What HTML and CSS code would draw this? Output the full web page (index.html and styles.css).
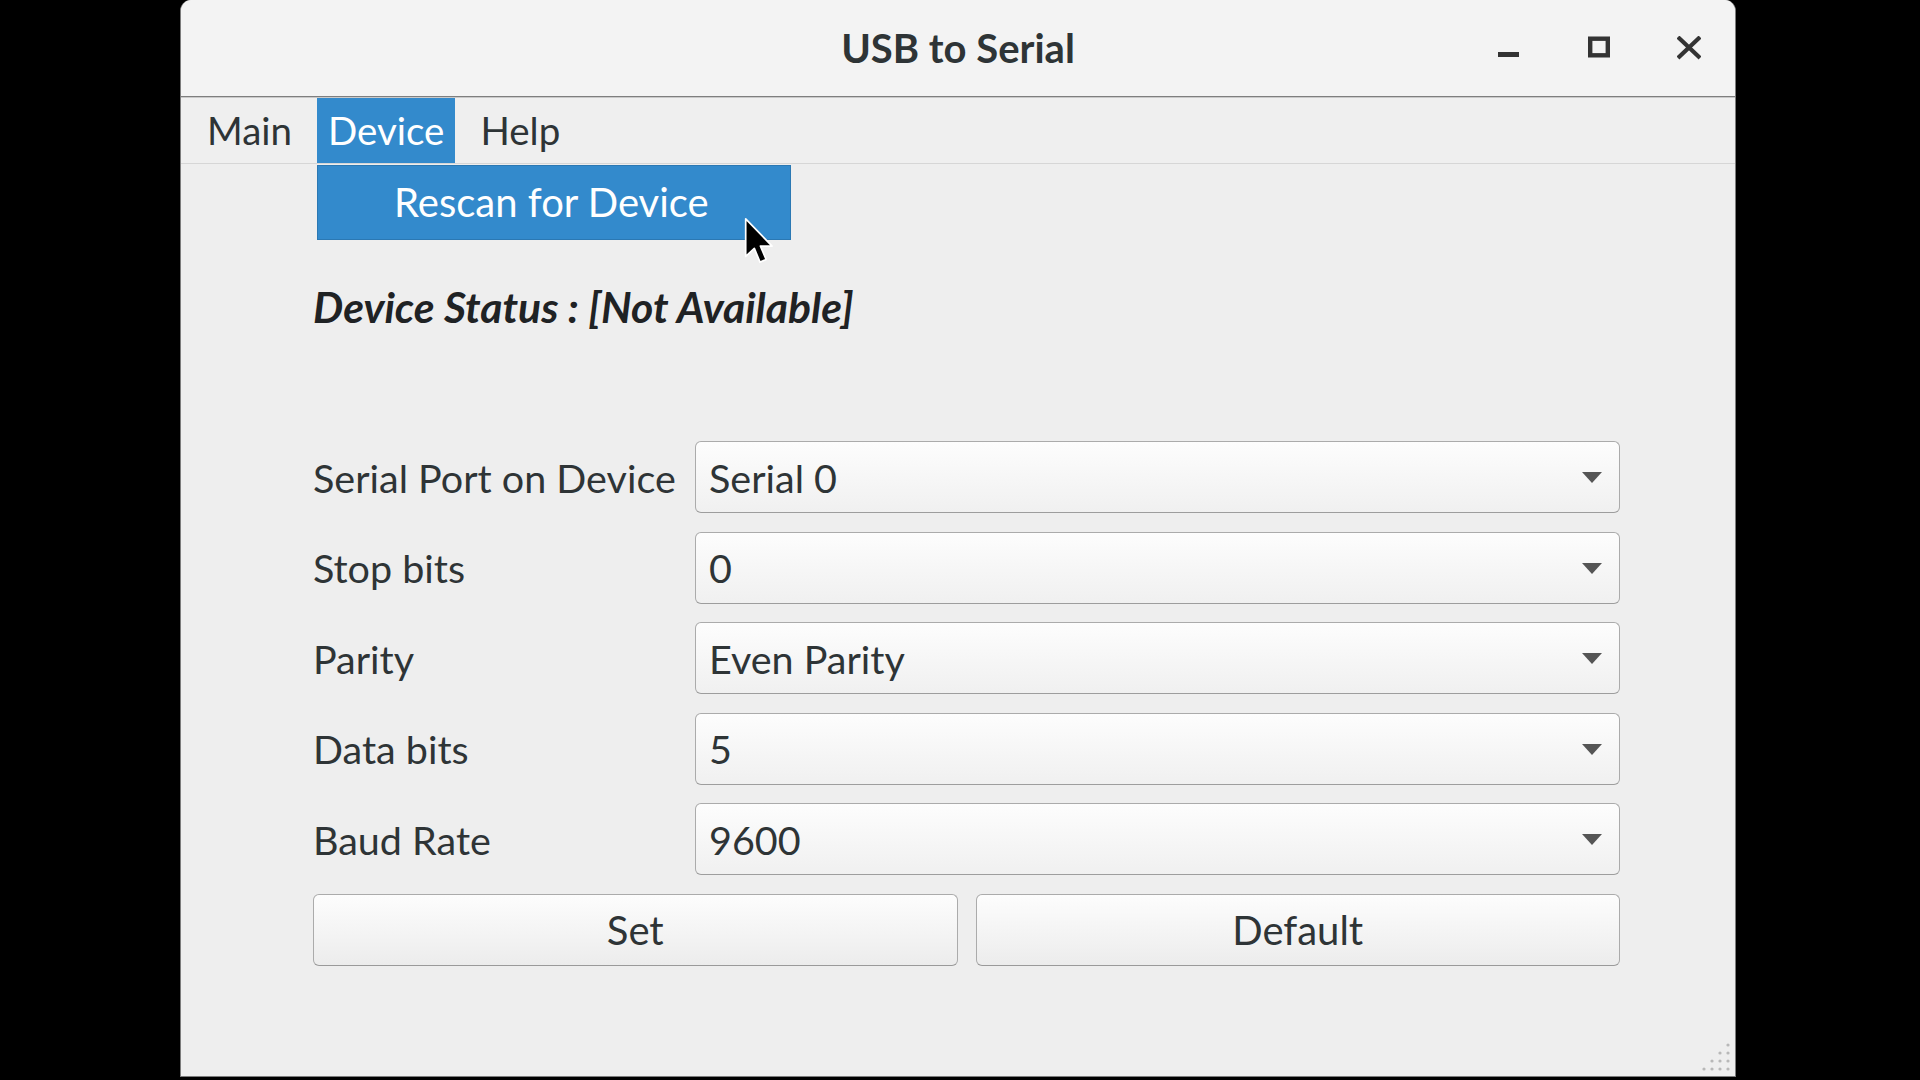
FILE: index.html
```html
<!DOCTYPE html>
<html lang="en">
<head>
<meta charset="utf-8">
<title>USB to Serial</title>
<link rel="stylesheet" href="styles.css">
</head>
<body>
<div class="window">
  <header class="titlebar">
    <div class="spacer"></div>
    <div class="title">USB to Serial</div>
    <div class="controls">
      <span class="ctl"><svg width="24" height="24" viewBox="0 0 24 24"><rect x="1" y="16" width="21" height="5" fill="#333"/></svg></span>
      <span class="ctl"><svg width="24" height="24" viewBox="0 0 24 24"><rect x="3.2" y="2.7" width="17.6" height="16.6" fill="none" stroke="#333" stroke-width="4.4"/></svg></span>
      <span class="ctl"><svg width="24" height="24" viewBox="0 0 24 24"><path d="M2.5 2.5 L21.5 20.5 M21.5 2.5 L2.5 20.5" stroke="#333" stroke-width="4.2" stroke-linecap="square"/></svg></span>
    </div>
  </header>
  <nav class="menubar">
    <span class="menu">Main</span>
    <span class="menu active">Device
      <span class="dropdown"><span class="dd-item">Rescan for Device</span></span>
    </span>
    <span class="menu">Help</span>
  </nav>
  <main class="content">
    <div class="status">Device Status : [Not Available]</div>
    <div class="form">
      <div class="label">Serial Port on Device</div>
      <div class="combo"><span>Serial 0</span><i class="arrow"></i></div>
      <div class="label">Stop bits</div>
      <div class="combo"><span>0</span><i class="arrow"></i></div>
      <div class="label">Parity</div>
      <div class="combo"><span>Even Parity</span><i class="arrow"></i></div>
      <div class="label">Data bits</div>
      <div class="combo"><span>5</span><i class="arrow"></i></div>
      <div class="label">Baud Rate</div>
      <div class="combo"><span>9600</span><i class="arrow"></i></div>
      <div class="buttons">
        <button class="btn">Set</button>
        <button class="btn">Default</button>
      </div>
    </div>
  </main>
  <svg class="grip" width="30" height="30" viewBox="0 0 30 30">
    <g fill="#b8b8b8">
      <circle cx="26" cy="3" r="1.6"/>
      <circle cx="18" cy="11" r="1.6"/><circle cx="26" cy="11" r="1.6"/>
      <circle cx="10" cy="19" r="1.6"/><circle cx="18" cy="19" r="1.6"/><circle cx="26" cy="19" r="1.6"/>
      <circle cx="2" cy="27" r="1.6"/><circle cx="10" cy="27" r="1.6"/><circle cx="18" cy="27" r="1.6"/><circle cx="26" cy="27" r="1.6"/>
    </g>
  </svg>
</div>
<svg class="cursor" width="34" height="52" viewBox="0 0 24 36">
  <path d="M1.2 1 L1.2 27.5 L7.3 21.8 L11.3 31.5 L15.6 29.6 L11.6 20.2 L19.8 20.2 Z" fill="#000" stroke="#fff" stroke-width="1.2" stroke-linejoin="round"/>
</svg>
</body>
</html>
```
FILE: styles.css
```css
html, body {
  margin: 0;
  padding: 0;
}
body {
  width: 1920px;
  height: 1080px;
  background: #000;
  overflow: hidden;
  position: relative;
  font-family: Lato, "Noto Sans", sans-serif;
  color: #2e3436;
}
.window {
  position: relative;
  margin-left: 180px;
  width: 1554px;
  height: 1076px;
  border: 1px solid #7c7c7c;
  border-top: none;
  border-radius: 11px 11px 0 0;
  background: #eeeeee;
  display: flex;
  flex-direction: column;
}
.titlebar {
  height: 96px;
  flex: none;
  display: grid;
  grid-template-columns: 1fr auto 1fr;
  align-items: center;
  background: #f3f3f3;
  border-bottom: 1px solid #7e7e7e;
  border-radius: 11px 11px 0 0;
  box-shadow: 0 1px 0 #c9c9c9;
}
.title {
  font-size: 40px;
  font-weight: 700;
  color: #2e3436;
  line-height: 96px;
}
.controls {
  justify-self: end;
  display: flex;
  padding-right: 1px;
  height: 96px;
}
.ctl {
  width: 90px;
  height: 96px;
  display: flex;
  align-items: center;
  justify-content: center;
}
.ctl svg {
  display: block;
  margin-top: -1px;
}
.menubar {
  height: 65px;
  flex: none;
  display: flex;
  align-items: stretch;
  gap: 14px;
  padding-left: 15px;
  margin-top: 1px;
  border-bottom: 1px solid #d6d6d6;
  background: #efefef;
}
.menu {
  position: relative;
  display: flex;
  align-items: center;
  padding: 0 11px;
  font-size: 38.5px;
  line-height: 65px;
  color: #2e3436;
}
.menu.active {
  background: #338acc;
  color: #fff;
}
.dropdown {
  position: absolute;
  left: 0;
  top: 67px;
  width: 474px;
  height: 75px;
  background: #338acc;
  border: 1px solid #2b78b3;
  box-sizing: border-box;
  display: flex;
  align-items: center;
  z-index: 5;
}
.dd-item {
  padding-left: 76px;
  color: #fff;
  font-size: 40px;
  line-height: 75px;
  white-space: nowrap;
}
.content {
  flex: 1;
  padding: 113px 115px 0 132px;
}
.status {
  font-size: 42.7px;
  font-weight: 700;
  font-style: italic;
  line-height: 60px;
  color: #1f2224;
}
.form {
  margin-top: 104px;
  display: grid;
  grid-template-columns: 382px 1fr;
  grid-auto-rows: 72px;
  row-gap: 18.6px;
}
.label {
  display: flex;
  align-items: center;
  font-size: 39.5px;
  color: #2e3436;
  white-space: nowrap;
}
.combo {
  position: relative;
  display: flex;
  align-items: center;
  padding-left: 13px;
  border: 1px solid #ababab;
  border-bottom-color: #9d9d9d;
  border-radius: 6px;
  background: linear-gradient(#fdfdfd, #f0f0f0);
  font-size: 39.5px;
  color: #2e3436;
}
.arrow {
  position: absolute;
  right: 17px;
  top: 50%;
  margin-top: -5px;
  width: 0;
  height: 0;
  border-left: 10px solid transparent;
  border-right: 10px solid transparent;
  border-top: 11px solid #555;
}
.buttons {
  grid-column: 1 / -1;
  display: flex;
  gap: 18px;
}
.btn {
  flex: 1;
  margin: 0;
  font-family: inherit;
  font-size: 40px;
  color: #2e3436;
  border: 1px solid #ababab;
  border-bottom-color: #9a9a9a;
  border-radius: 6px;
  background: linear-gradient(#fdfdfd, #ececec);
  padding: 0;
}
.grip {
  position: absolute;
  right: 3px;
  bottom: 4px;
}
.cursor {
  position: absolute;
  left: 744px;
  top: 217px;
  z-index: 10;
}
```
